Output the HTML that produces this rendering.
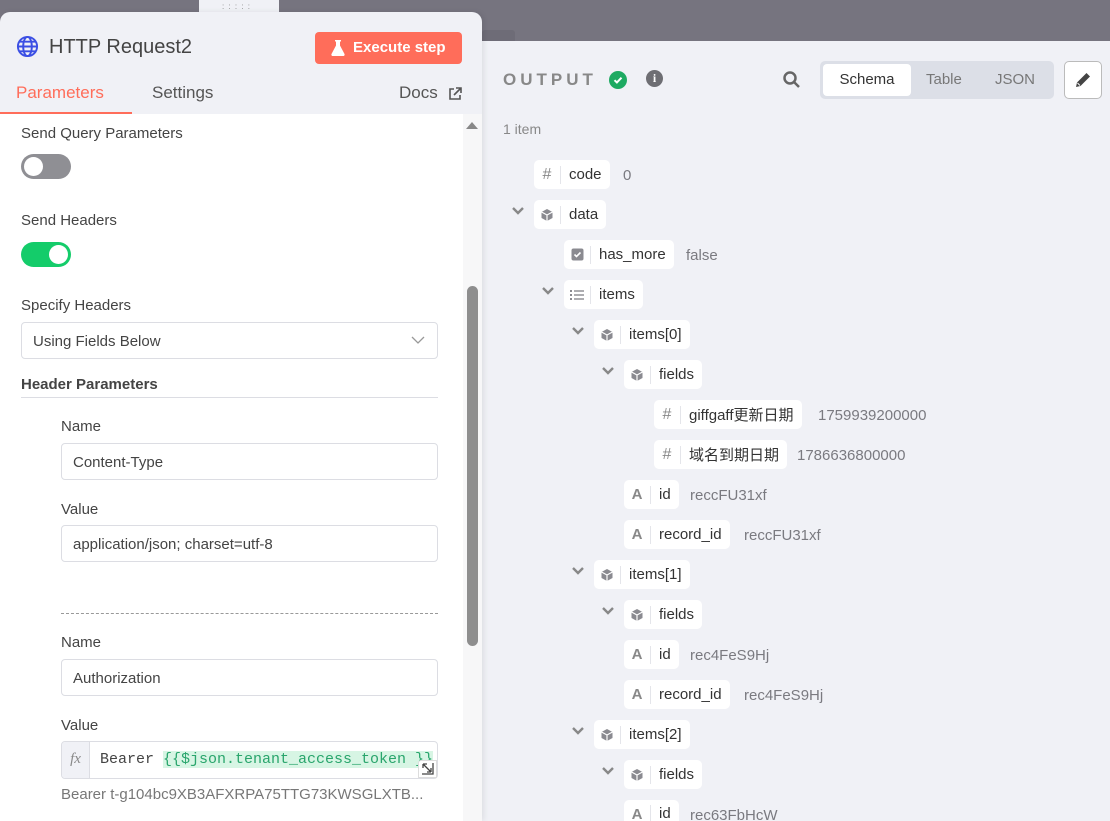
<!DOCTYPE html>
<html style="overflow:hidden;height:821px"><head><meta charset="utf-8"><style>
*{box-sizing:border-box;margin:0;padding:0}
html,body{overflow:hidden}
body{width:1110px;height:821px;background:#76747f;font-family:"Liberation Sans","Noto Sans CJK SC",sans-serif;position:relative;color:#444}
.a{position:absolute}
.right{left:482px;top:41px;width:628px;height:780px;background:#f0f1f6}
.left{left:0;top:12px;width:482px;height:809px;background:#f0f1f6;border-radius:10px 10px 0 0;box-shadow:2px 0 6px rgba(0,0,0,.08)}
.lbl{font-size:15px;color:#444}
.inp{background:#fff;border:1px solid #dcdde3;border-radius:4px;height:37px;font-size:15px;color:#444;padding-left:11px;line-height:37px}
.pill{position:absolute;height:29px;background:#fff;border-radius:5px;display:flex;align-items:center;font-size:15px;color:#333;white-space:nowrap}
.pill .ic{width:27px;height:18px;display:flex;align-items:center;justify-content:center;color:#888;font-size:16px;border-right:1px solid #e4e5ea}
.pill .t{padding:0 8px 0 8px}
.val{position:absolute;font-size:15px;color:#7a7a80;white-space:nowrap}
.chev{position:absolute;width:14px;height:10px}
</style></head><body>
<div class="a" style="left:482px;top:30px;width:33px;height:11px;background:#6e6c77;border-radius:3px 3px 0 0"></div>
<div class="a right"></div>
<div class="a" style="left:199px;top:0;width:80px;height:14px;background:#f0f1f6"></div>
<div class="a" style="left:222px;top:5px;font-size:8px;color:#888;letter-spacing:1px;line-height:4px">: : : : :</div>
<div class="a left"></div>

<svg class="a" style="left:16px;top:35px" width="23" height="23" viewBox="0 0 24 24" fill="none" stroke="#3b4fe4" stroke-width="2"><circle cx="12" cy="12" r="10"/><ellipse cx="12" cy="12" rx="4.5" ry="10"/><path d="M2 12h20M3.5 7h17M3.5 17h17"/></svg>
<div class="a" style="left:49px;top:36px;font-size:20px;color:#444">HTTP Request2</div>
<div class="a" style="left:315px;top:32px;width:147px;height:32px;background:#ff6d5a;border-radius:4px;color:#fff;font-size:15px;font-weight:bold;line-height:32px;padding-left:38px">Execute step</div>
<svg class="a" style="left:331px;top:40px" width="14" height="16" viewBox="0 0 14 16"><path d="M4 0h6v1.5H9v4l4.5 8.5c.4.9-.2 2-1.2 2H1.7c-1 0-1.6-1.1-1.2-2L5 5.5v-4H4z" fill="#fff"/></svg>
<div class="a" style="left:16px;top:83px;font-size:17px;color:#ff6d5a">Parameters</div>
<div class="a" style="left:152px;top:83px;font-size:17px;color:#555">Settings</div>
<div class="a" style="left:399px;top:83px;font-size:17px;color:#555">Docs</div>
<svg class="a" style="left:448px;top:87px" width="14" height="14" viewBox="0 0 14 14" fill="none" stroke="#555" stroke-width="1.6"><path d="M6 2H2v10h10V8M8 1h5v5M13 1L6 8"/></svg>
<div class="a" style="left:0;top:112px;width:132px;height:2px;background:#ff6d5a"></div>

<div class="a" style="left:0;top:114px;width:463px;height:707px;background:#fff"></div>
<div class="a" style="left:463px;top:114px;width:19px;height:707px;background:#f7f7f8"></div>
<div class="a" style="left:466px;top:122px;width:0;height:0;border-left:6px solid transparent;border-right:6px solid transparent;border-bottom:7px solid #888"></div>
<div class="a" style="left:467px;top:286px;width:11px;height:360px;background:#8e8e8e;border-radius:6px"></div>

<div class="a lbl" style="left:21px;top:125px">Send Query Parameters</div>
<div class="a" style="left:21px;top:154px;width:50px;height:25px;border-radius:13px;background:#8f8f94"></div>
<div class="a" style="left:24px;top:157px;width:19px;height:19px;border-radius:50%;background:#fff"></div>
<div class="a lbl" style="left:21px;top:212px">Send Headers</div>
<div class="a" style="left:21px;top:242px;width:50px;height:25px;border-radius:13px;background:#14cc6a"></div>
<div class="a" style="left:49px;top:245px;width:19px;height:19px;border-radius:50%;background:#fff"></div>
<div class="a lbl" style="left:21px;top:297px">Specify Headers</div>
<div class="a inp" style="left:21px;top:322px;width:417px">Using Fields Below</div>
<svg class="a" style="left:411px;top:336px" width="14" height="9" viewBox="0 0 14 9" fill="none" stroke="#999" stroke-width="1.3"><path d="M1 1l6 6 6-6"/></svg>
<div class="a" style="left:21px;top:376px;font-size:15px;color:#444;font-weight:bold">Header Parameters</div>
<div class="a" style="left:21px;top:397px;width:417px;height:1px;background:#dcdde3"></div>

<div class="a lbl" style="left:61px;top:418px">Name</div>
<div class="a inp" style="left:61px;top:443px;width:377px">Content-Type</div>
<div class="a lbl" style="left:61px;top:501px">Value</div>
<div class="a inp" style="left:61px;top:525px;width:377px">application/json; charset=utf-8</div>
<div class="a" style="left:61px;top:613px;width:377px;border-top:1px dashed #999"></div>
<div class="a lbl" style="left:61px;top:634px">Name</div>
<div class="a inp" style="left:61px;top:659px;width:377px">Authorization</div>
<div class="a lbl" style="left:61px;top:717px">Value</div>
<div class="a" style="left:61px;top:741px;width:377px;height:38px;border:1px solid #dcdde3;border-radius:4px;background:#fff;overflow:hidden">
 <div class="a" style="left:0;top:0;width:28px;height:36px;background:#f0f1f6;border-right:1px solid #dcdde3;font-family:'Liberation Serif',serif;font-style:italic;color:#888;font-size:15px;line-height:34px;text-align:center">fx</div>
 <div class="a" style="left:38px;top:9px;font-family:'Liberation Mono',monospace;font-size:15px;color:#444;white-space:nowrap">Bearer <span style="background:#d7f5e4;color:#29a56c">{{$json.tenant_access_token }}</span></div>
</div>
<div class="a" style="left:418px;top:760px;width:19px;height:18px;background:#fff;border:1px solid #ddd;border-radius:3px 0 0 0"></div>
<svg class="a" style="left:421px;top:762px" width="13" height="13" viewBox="0 0 13 13" fill="none" stroke="#444" stroke-width="1.3"><path d="M2 2l8 8M2 2v4M2 2h4M10 10v-4M10 10h-4M1 12h11V1"/></svg>
<div class="a" style="left:61px;top:786px;font-size:15px;color:#777">Bearer t-g104bc9XB3AFXRPA75TTG73KWSGLXTB...</div>

<div class="a" style="left:503px;top:70px;font-size:17px;letter-spacing:4px;color:#888;font-weight:bold">OUTPUT</div>
<div class="a" style="left:609px;top:71px;width:18px;height:18px;border-radius:50%;background:#1eaa62"></div>
<svg class="a" style="left:612px;top:74px" width="12" height="12" viewBox="0 0 12 12" fill="none" stroke="#fff" stroke-width="2"><path d="M2.5 6.2l2.4 2.3 4.6-4.8"/></svg>
<div class="a" style="left:646px;top:70px;width:17px;height:17px;border-radius:50%;background:#6e6e73;color:#fff;font-size:12px;font-weight:bold;text-align:center;line-height:17px;font-family:'Liberation Serif',serif">i</div>
<svg class="a" style="left:782px;top:70px" width="19" height="19" viewBox="0 0 19 19" fill="none" stroke="#666" stroke-width="2.5"><circle cx="8" cy="8" r="5.5"/><path d="M12 12l5 5"/></svg>
<div class="a" style="left:820px;top:61px;width:234px;height:38px;background:#dcdfe7;border-radius:5px"></div>
<div class="a" style="left:823px;top:64px;width:88px;height:32px;background:#fff;border-radius:4px;font-size:15px;color:#333;text-align:center;line-height:32px">Schema</div>
<div class="a" style="left:926px;top:71px;font-size:15px;color:#777">Table</div>
<div class="a" style="left:995px;top:71px;font-size:15px;color:#777">JSON</div>
<div class="a" style="left:1064px;top:61px;width:38px;height:38px;background:#fff;border:1px solid #bbb;border-radius:5px"></div>
<svg class="a" style="left:1073px;top:70px" width="20" height="20" viewBox="0 0 20 20"><path d="M3 17l1-4.5L13.5 3l3.5 3.5L7.5 16z" fill="#444"/><path d="M4.5 13l2.5 2.5" stroke="#fff" stroke-width="1"/></svg>
<div class="a" style="left:503px;top:121px;font-size:14px;color:#888">1 item</div>

<svg width="0" height="0" style="position:absolute"><defs>
<symbol id="cube" viewBox="0 0 14 14"><path d="M7 1l5.5 3v6L7 13 1.5 10V4z" fill="#8a8a90"/><path d="M1.5 4L7 7l5.5-3M7 7v6" stroke="#fff" stroke-width="1.2" fill="none"/></symbol>
<symbol id="chev" viewBox="0 0 14 10"><path d="M2 2l5 5 5-5" stroke="#888" stroke-width="2.4" fill="none"/></symbol>
</defs></svg>

<div class="pill" style="left:534px;top:160px"><span class="ic">#</span><span class="t">code</span></div><div class="val" style="left:623px;top:167px">0</div>

<svg class="chev" style="left:511px;top:206px"><use href="#chev"/></svg>
<div class="pill" style="left:534px;top:200px"><span class="ic"><svg width="14" height="14"><use href="#cube"/></svg></span><span class="t">data</span></div>

<div class="pill" style="left:564px;top:240px"><span class="ic"><svg width="13" height="13" viewBox="0 0 13 13"><rect x="0.5" y="0.5" width="12" height="12" rx="2" fill="#8a8a90"/><path d="M3.5 6.5l2 2 4-4" stroke="#fff" stroke-width="1.6" fill="none"/></svg></span><span class="t">has_more</span></div><div class="val" style="left:686px;top:247px">false</div>

<svg class="chev" style="left:541px;top:286px"><use href="#chev"/></svg>
<div class="pill" style="left:564px;top:280px"><span class="ic"><svg width="14" height="12" viewBox="0 0 14 12" fill="#8a8a90"><rect x="0" y="1" width="2" height="2"/><rect x="0" y="5" width="2" height="2"/><rect x="0" y="9" width="2" height="2"/><rect x="4" y="1.3" width="10" height="1.4"/><rect x="4" y="5.3" width="10" height="1.4"/><rect x="4" y="9.3" width="10" height="1.4"/></svg></span><span class="t">items</span></div>

<svg class="chev" style="left:571px;top:326px"><use href="#chev"/></svg>
<div class="pill" style="left:594px;top:320px"><span class="ic"><svg width="14" height="14"><use href="#cube"/></svg></span><span class="t">items[0]</span></div>
<svg class="chev" style="left:601px;top:366px"><use href="#chev"/></svg>
<div class="pill" style="left:624px;top:360px"><span class="ic"><svg width="14" height="14"><use href="#cube"/></svg></span><span class="t">fields</span></div>
<div class="pill" style="left:654px;top:400px"><span class="ic">#</span><span class="t">giffgaff更新日期</span></div><div class="val" style="left:818px;top:407px">1759939200000</div>
<div class="pill" style="left:654px;top:440px"><span class="ic">#</span><span class="t">域名到期日期</span></div><div class="val" style="left:797px;top:447px">1786636800000</div>
<div class="pill" style="left:624px;top:480px"><span class="ic" style="font-weight:bold;font-size:15px">A</span><span class="t">id</span></div><div class="val" style="left:690px;top:487px">reccFU31xf</div>
<div class="pill" style="left:624px;top:520px"><span class="ic" style="font-weight:bold;font-size:15px">A</span><span class="t">record_id</span></div><div class="val" style="left:744px;top:527px">reccFU31xf</div>

<svg class="chev" style="left:571px;top:566px"><use href="#chev"/></svg>
<div class="pill" style="left:594px;top:560px"><span class="ic"><svg width="14" height="14"><use href="#cube"/></svg></span><span class="t">items[1]</span></div>
<svg class="chev" style="left:601px;top:606px"><use href="#chev"/></svg>
<div class="pill" style="left:624px;top:600px"><span class="ic"><svg width="14" height="14"><use href="#cube"/></svg></span><span class="t">fields</span></div>
<div class="pill" style="left:624px;top:640px"><span class="ic" style="font-weight:bold;font-size:15px">A</span><span class="t">id</span></div><div class="val" style="left:690px;top:647px">rec4FeS9Hj</div>
<div class="pill" style="left:624px;top:680px"><span class="ic" style="font-weight:bold;font-size:15px">A</span><span class="t">record_id</span></div><div class="val" style="left:744px;top:687px">rec4FeS9Hj</div>

<svg class="chev" style="left:571px;top:726px"><use href="#chev"/></svg>
<div class="pill" style="left:594px;top:720px"><span class="ic"><svg width="14" height="14"><use href="#cube"/></svg></span><span class="t">items[2]</span></div>
<svg class="chev" style="left:601px;top:766px"><use href="#chev"/></svg>
<div class="pill" style="left:624px;top:760px"><span class="ic"><svg width="14" height="14"><use href="#cube"/></svg></span><span class="t">fields</span></div>
<div class="pill" style="left:624px;top:800px;height:21px;border-radius:5px 5px 0 0;align-items:flex-start;padding-top:5px"><span class="ic" style="font-weight:bold;font-size:15px">A</span><span class="t">id</span></div><div class="val" style="left:690px;top:807px">rec63FbHcW</div>
</body></html>
